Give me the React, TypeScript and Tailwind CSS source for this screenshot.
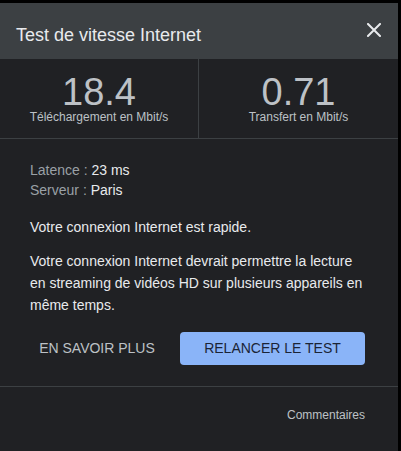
export default function App() {
  return (
    <div
      className="w-[401px] h-[451px] bg-black pt-[3px] pr-[3px] overflow-hidden"
      style={{ fontFamily: '"Liberation Sans", Arial, sans-serif' }}
    >
      <div className="w-[398px] h-[448px] bg-[#202124] flex flex-col">
        {/* Header */}
        <div className="h-[56px] bg-[#3c4043] flex items-start justify-between pl-4 pr-[17px]">
          <h1 className="pt-[20px] text-[18px] leading-[24px] text-[#e8eaed]">Test de vitesse Internet</h1>
          <button className="mt-[20px] w-[14px] h-[14px] flex items-center justify-center" aria-label="Fermer">
            <svg width="14" height="14" viewBox="0 0 14 14">
              <path d="M1 1 L13 13 M13 1 L1 13" stroke="#e8eaed" strokeWidth="2" strokeLinecap="square" />
            </svg>
          </button>
        </div>

        {/* Results */}
        <div className="flex border-b border-[#3c4043]">
          <div className="w-[199px] flex flex-col items-center pt-[16px] pb-[15px] border-r border-[#3c4043]">
            <div className="text-[38px] leading-[34px] text-[#bdc1c6]">18.4</div>
            <div className="mt-[2px] text-[12px] leading-[12px] text-[#bdc1c6]">Téléchargement en Mbit/s</div>
          </div>
          <div className="flex-1 flex flex-col items-center pt-[16px] pb-[15px]">
            <div className="text-[38px] leading-[34px] text-[#bdc1c6]">0.71</div>
            <div className="mt-[2px] text-[12px] leading-[12px] text-[#bdc1c6]">Transfert en Mbit/s</div>
          </div>
        </div>

        {/* Details */}
        <div className="pl-[30px] pr-[33px] pt-[21px] pb-[21px] text-[14px] text-[#e8eaed] border-b border-[#3c4043]">
          <div className="leading-[20px]">
            <span className="text-[#9aa0a6]">Latence : </span>23 ms
          </div>
          <div className="leading-[20px]">
            <span className="text-[#9aa0a6]">Serveur : </span>Paris
          </div>
          <p className="mt-4 leading-[22px]">Votre connexion Internet est rapide.</p>
          <p className="mt-3 leading-[22px]">
            Votre connexion Internet devrait permettre la lecture en streaming de vidéos HD sur plusieurs appareils en
            même temps.
          </p>
          <div className="mt-4 flex items-center gap-4">
            <button className="shrink-0 whitespace-nowrap h-[33px] w-[134px] text-[14px] text-[#bdc1c6]">
              EN SAVOIR PLUS
            </button>
            <button className="shrink-0 whitespace-nowrap h-[33px] w-[185px] rounded-[4px] bg-[#8ab4f8] text-[14px] text-[#1b2436]">
              RELANCER LE TEST
            </button>
          </div>
        </div>

        {/* Footer */}
        <div className="flex justify-end pr-[33px] pt-[20px]">
          <button className="text-[12px] leading-[16px] text-[#bdc1c6]">Commentaires</button>
        </div>
      </div>
    </div>
  );
}
